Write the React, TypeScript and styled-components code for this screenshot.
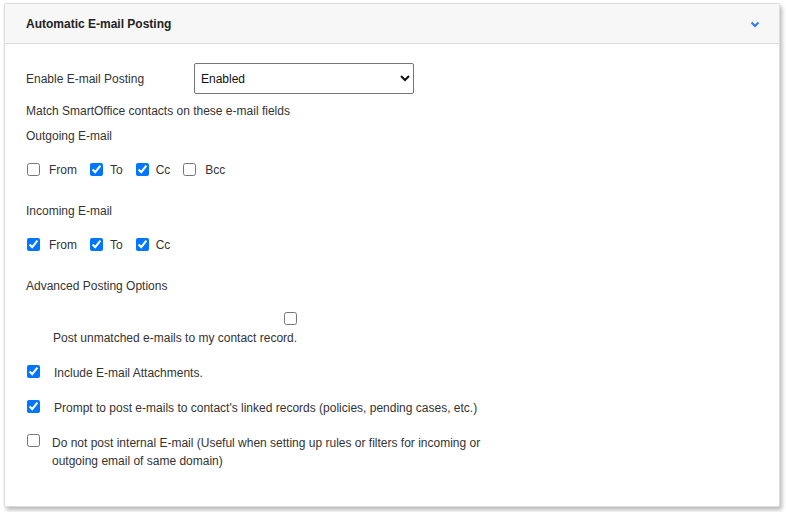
import React from "react";
import styled, { createGlobalStyle } from "styled-components";

const GlobalStyle = createGlobalStyle`
  html, body {
    margin: 0;
    padding: 0;
    background: #ffffff;
  }
  body {
    font-family: "Liberation Sans", Arial, sans-serif;
    font-size: 12px;
    color: #333333;
  }
`;

const Page = styled.div`
  padding: 3px 6px 0 4px;
  width: 786px;
  height: 512px;
  box-sizing: border-box;
`;

const Panel = styled.section`
  height: 504px;
  box-sizing: border-box;
  border: 1px solid #dcdcdc;
  border-radius: 2px;
  background: #ffffff;
  box-shadow: 2px 3px 4px rgba(0, 0, 0, 0.28);
  display: flex;
  flex-direction: column;
`;

const Header = styled.div`
  height: 39px;
  flex: none;
  display: flex;
  align-items: center;
  justify-content: space-between;
  padding: 0 19px 0 21px;
  background: #f7f7f7;
  border-bottom: 1px solid #dddddd;
`;

const Title = styled.h2`
  margin: 0;
  font-size: 12px;
  font-weight: 700;
  color: #222222;
`;

const Chevron = styled.svg`
  display: block;
  margin-top: 2px;
`;

const Body = styled.div`
  padding: 19px 21px 0 21px;
  display: flex;
  flex-direction: column;
  align-items: flex-start;
`;

const FieldRow = styled.div`
  display: flex;
  align-items: center;
`;

const FieldLabel = styled.label`
  width: 168px;
  line-height: 14px;
`;

const Select = styled.select`
  width: 220px;
  height: 31px;
  box-sizing: border-box;
  border: 1px solid #767676;
  border-radius: 2px;
  background: #ffffff;
  padding: 0 2px;
  font-family: "Liberation Sans", Arial, sans-serif;
  font-size: 12px;
  color: #111111;
`;

const Text = styled.div<{ $top: number }>`
  margin-top: ${(p) => p.$top}px;
  line-height: 14px;
`;

const CheckRow = styled.div<{ $top: number }>`
  margin-top: ${(p) => p.$top}px;
  display: flex;
  align-items: center;
  height: 14px;
`;

const Box = styled.input.attrs({ type: "checkbox" })`
  margin: 0 0 0 1px;
  width: 13px;
  height: 13px;
  flex: none;
`;

const InlineLabel = styled.span<{ $gap: number; $after: number }>`
  margin-left: ${(p) => p.$gap}px;
  margin-right: ${(p) => p.$after}px;
  padding-top: 2px;
  line-height: 14px;
`;

const StackedOption = styled.label`
  margin-top: 19px;
  margin-left: 27px;
  display: inline-flex;
  flex-direction: column;
  align-items: flex-end;
  gap: 6px;
  line-height: 14px;
`;

const OptionRow = styled.label<{ $top: number; $gap: number; $wrap?: boolean }>`
  margin-top: ${(p) => p.$top}px;
  display: flex;
  align-items: ${(p) => (p.$wrap ? "flex-start" : "center")};
  line-height: ${(p) => (p.$wrap ? "18px" : "14px")};
  ${(p) => (p.$wrap ? "width: 460px;" : "")}
  & > input {
    margin-top: ${(p) => (p.$wrap ? "1px" : "0")};
  }
  & > span {
    margin-left: ${(p) => p.$gap}px;
    padding-top: ${(p) => (p.$wrap ? "1px" : "3px")};
  }
`;

export default function App() {
  return (
    <>
      <GlobalStyle />
      <Page>
        <Panel>
          <Header>
            <Title>Automatic E-mail Posting</Title>
            <Chevron width="10" height="7" viewBox="0 0 10 7">
              <polyline
                points="1.5,1.5 5,5 8.5,1.5"
                fill="none"
                stroke="#2f7cf6"
                strokeWidth="2"
              />
            </Chevron>
          </Header>
          <Body>
            <FieldRow>
              <FieldLabel>Enable E-mail Posting</FieldLabel>
              <Select defaultValue="Enabled">
                <option>Enabled</option>
                <option>Disabled</option>
              </Select>
            </FieldRow>
            <Text $top={10}>Match SmartOffice contacts on these e-mail fields</Text>
            <Text $top={11}>Outgoing E-mail</Text>
            <CheckRow $top={19}>
              <Box />
              <InlineLabel $gap={9} $after={12}>From</InlineLabel>
              <Box defaultChecked />
              <InlineLabel $gap={7} $after={12}>To</InlineLabel>
              <Box defaultChecked />
              <InlineLabel $gap={7} $after={12}>Cc</InlineLabel>
              <Box />
              <InlineLabel $gap={9} $after={0}>Bcc</InlineLabel>
            </CheckRow>
            <Text $top={28}>Incoming E-mail</Text>
            <CheckRow $top={19}>
              <Box defaultChecked />
              <InlineLabel $gap={9} $after={12}>From</InlineLabel>
              <Box defaultChecked />
              <InlineLabel $gap={7} $after={12}>To</InlineLabel>
              <Box defaultChecked />
              <InlineLabel $gap={7} $after={0}>Cc</InlineLabel>
            </CheckRow>
            <Text $top={28}>Advanced Posting Options</Text>
            <StackedOption>
              <Box />
              <span>Post unmatched e-mails to my contact record.</span>
            </StackedOption>
            <OptionRow $top={18} $gap={14}>
              <Box defaultChecked />
              <span>Include E-mail Attachments.</span>
            </OptionRow>
            <OptionRow $top={18} $gap={14}>
              <Box defaultChecked />
              <span>Prompt to post e-mails to contact's linked records (policies, pending cases, etc.)</span>
            </OptionRow>
            <OptionRow $top={18} $gap={12} $wrap>
              <Box />
              <span>
                Do not post internal E-mail (Useful when setting up rules or filters for incoming or
                outgoing email of same domain)
              </span>
            </OptionRow>
          </Body>
        </Panel>
      </Page>
    </>
  );
}
